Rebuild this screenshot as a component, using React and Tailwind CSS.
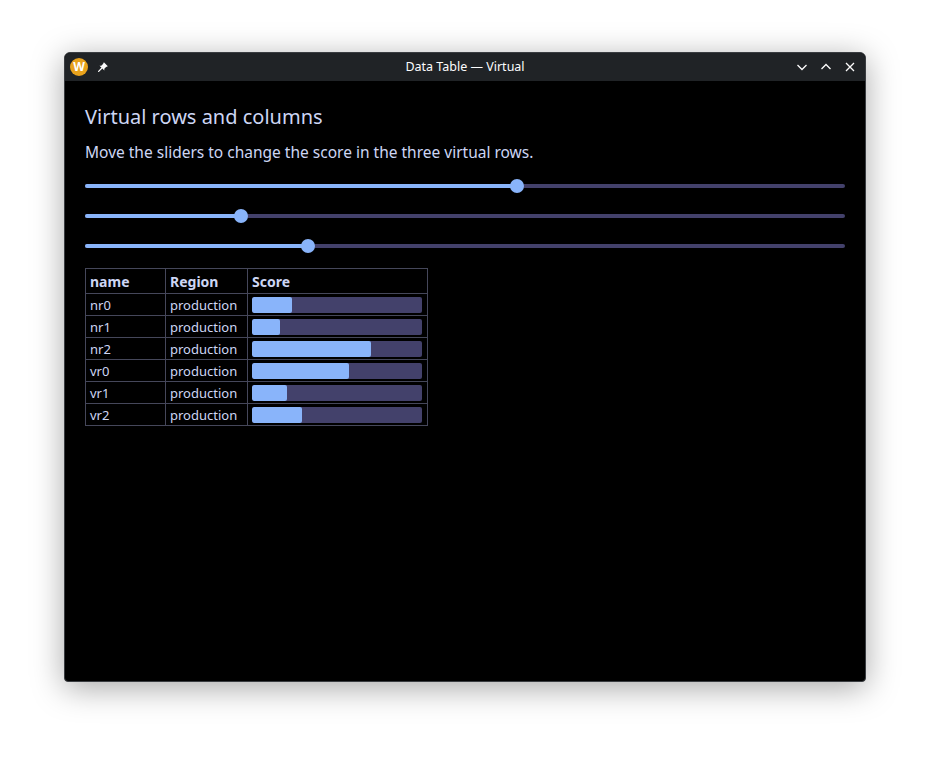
import React, { useState } from 'react';

const rows = [
  { name: 'nr0', region: 'production', score: 0.235 },
  { name: 'nr1', region: 'production', score: 0.165 },
  { name: 'nr2', region: 'production', score: 0.7 },
];

const Slider = ({ value, onChange }) => (
  <div className="relative h-[14px] w-full">
    <div className="absolute left-0 right-0 top-[5px] h-[4px] rounded-full bg-[#43416b]" />
    <div
      className="absolute left-0 top-[5px] h-[4px] rounded-full bg-[#89b4fa]"
      style={{ width: `${value * 100}%` }}
    />
    <div
      className="absolute top-0 h-[14px] w-[14px] -ml-[7px] rounded-full bg-[#89b4fa]"
      style={{ left: `${value * 100}%` }}
    />
    <input
      type="range"
      min="0"
      max="1000"
      value={Math.round(value * 1000)}
      onChange={(e) => onChange(e.target.value / 1000)}
      className="absolute inset-0 w-full opacity-0 cursor-pointer"
    />
  </div>
);

const ScoreBar = ({ value }) => (
  <div className="h-[16px] w-[170px] rounded-[2px] bg-[#43416b] overflow-hidden">
    <div className="h-full rounded-[2px] bg-[#89b4fa]" style={{ width: `${value * 100}%` }} />
  </div>
);

export default function App() {
  const [virtual, setVirtual] = useState([0.568, 0.205, 0.293]);

  const allRows = [
    ...rows,
    ...virtual.map((score, i) => ({ name: `vr${i}`, region: 'production', score })),
  ];

  const setAt = (i) => (v) => setVirtual((prev) => prev.map((p, j) => (j === i ? v : p)));

  return (
    <div className="w-[930px] h-[758px] bg-white pt-[52px] pl-[64px] font-['Noto_Sans',sans-serif]">
      {/* window */}
      <div className="w-[802px] h-[630px] flex flex-col rounded-t-[6px] rounded-b-[4px] overflow-hidden border border-[#3a3d41] bg-black shadow-[0_6px_32px_rgba(0,0,0,0.35)]">
        {/* title bar */}
        <div className="h-[28px] shrink-0 bg-[#202326] flex items-center px-[5px] relative">
          <div className="w-[18px] h-[18px] rounded-full bg-[#e8a21c] flex items-center justify-center">
            <span className="text-white text-[12px] font-bold leading-none">W</span>
          </div>
          <svg className="ml-[8px]" width="14" height="14" viewBox="0 0 16 16" fill="none">
            <path d="M9 2.5 L13.5 7 L11.5 8 L9.5 10 L9.5 12 L4 6.5 L6 6.5 L8 4.5 Z" fill="#fcfcfc" />
            <path d="M6.5 9.5 L3 13" stroke="#fcfcfc" strokeWidth="1.5" strokeLinecap="round" />
          </svg>
          <div className="absolute inset-0 flex items-center justify-center pointer-events-none">
            <span className="text-[#fcfcfc] text-[12.5px]">Data Table — Virtual</span>
          </div>
          <div className="ml-auto flex items-center gap-[10px] pr-[3px]">
            <svg width="14" height="14" viewBox="0 0 14 14" fill="none">
              <path d="M2.5 5 L7 9.5 L11.5 5" stroke="#fcfcfc" strokeWidth="1.3" />
            </svg>
            <svg width="14" height="14" viewBox="0 0 14 14" fill="none">
              <path d="M2.5 9 L7 4.5 L11.5 9" stroke="#fcfcfc" strokeWidth="1.3" />
            </svg>
            <svg width="14" height="14" viewBox="0 0 14 14" fill="none">
              <path d="M3 3 L11 11 M11 3 L3 11" stroke="#fcfcfc" strokeWidth="1.3" />
            </svg>
          </div>
        </div>

        {/* content */}
        <div className="flex-1 px-[20px] pt-[22px] text-[#cdd6f4]">
          <h1 className="text-[20px] leading-[28px]">Virtual rows and columns</h1>
          <p className="mt-[10px] text-[15.5px] leading-[22px]">
            Move the sliders to change the score in the three virtual rows.
          </p>

          <div className="mt-[16px] flex flex-col gap-[16px]">
            {virtual.map((v, i) => (
              <Slider key={i} value={v} onChange={setAt(i)} />
            ))}
          </div>

          <table className="mt-[15px] border-collapse text-[13px]">
            <thead>
              <tr className="h-[25px]">
                <th className="w-[80px] border border-[#45475a] px-[4px] text-left font-bold text-[14px]">name</th>
                <th className="w-[82px] border border-[#45475a] px-[4px] text-left font-bold text-[14px]">Region</th>
                <th className="w-[180px] border border-[#45475a] px-[4px] text-left font-bold text-[14px]">Score</th>
              </tr>
            </thead>
            <tbody>
              {allRows.map((r) => (
                <tr key={r.name} className="h-[22px]">
                  <td className="border border-[#45475a] px-[4px] leading-[20px]">{r.name}</td>
                  <td className="border border-[#45475a] px-[4px] leading-[20px]">{r.region}</td>
                  <td className="border border-[#45475a] px-[4px] py-0">
                    <ScoreBar value={r.score} />
                  </td>
                </tr>
              ))}
            </tbody>
          </table>
        </div>
      </div>
    </div>
  );
}
